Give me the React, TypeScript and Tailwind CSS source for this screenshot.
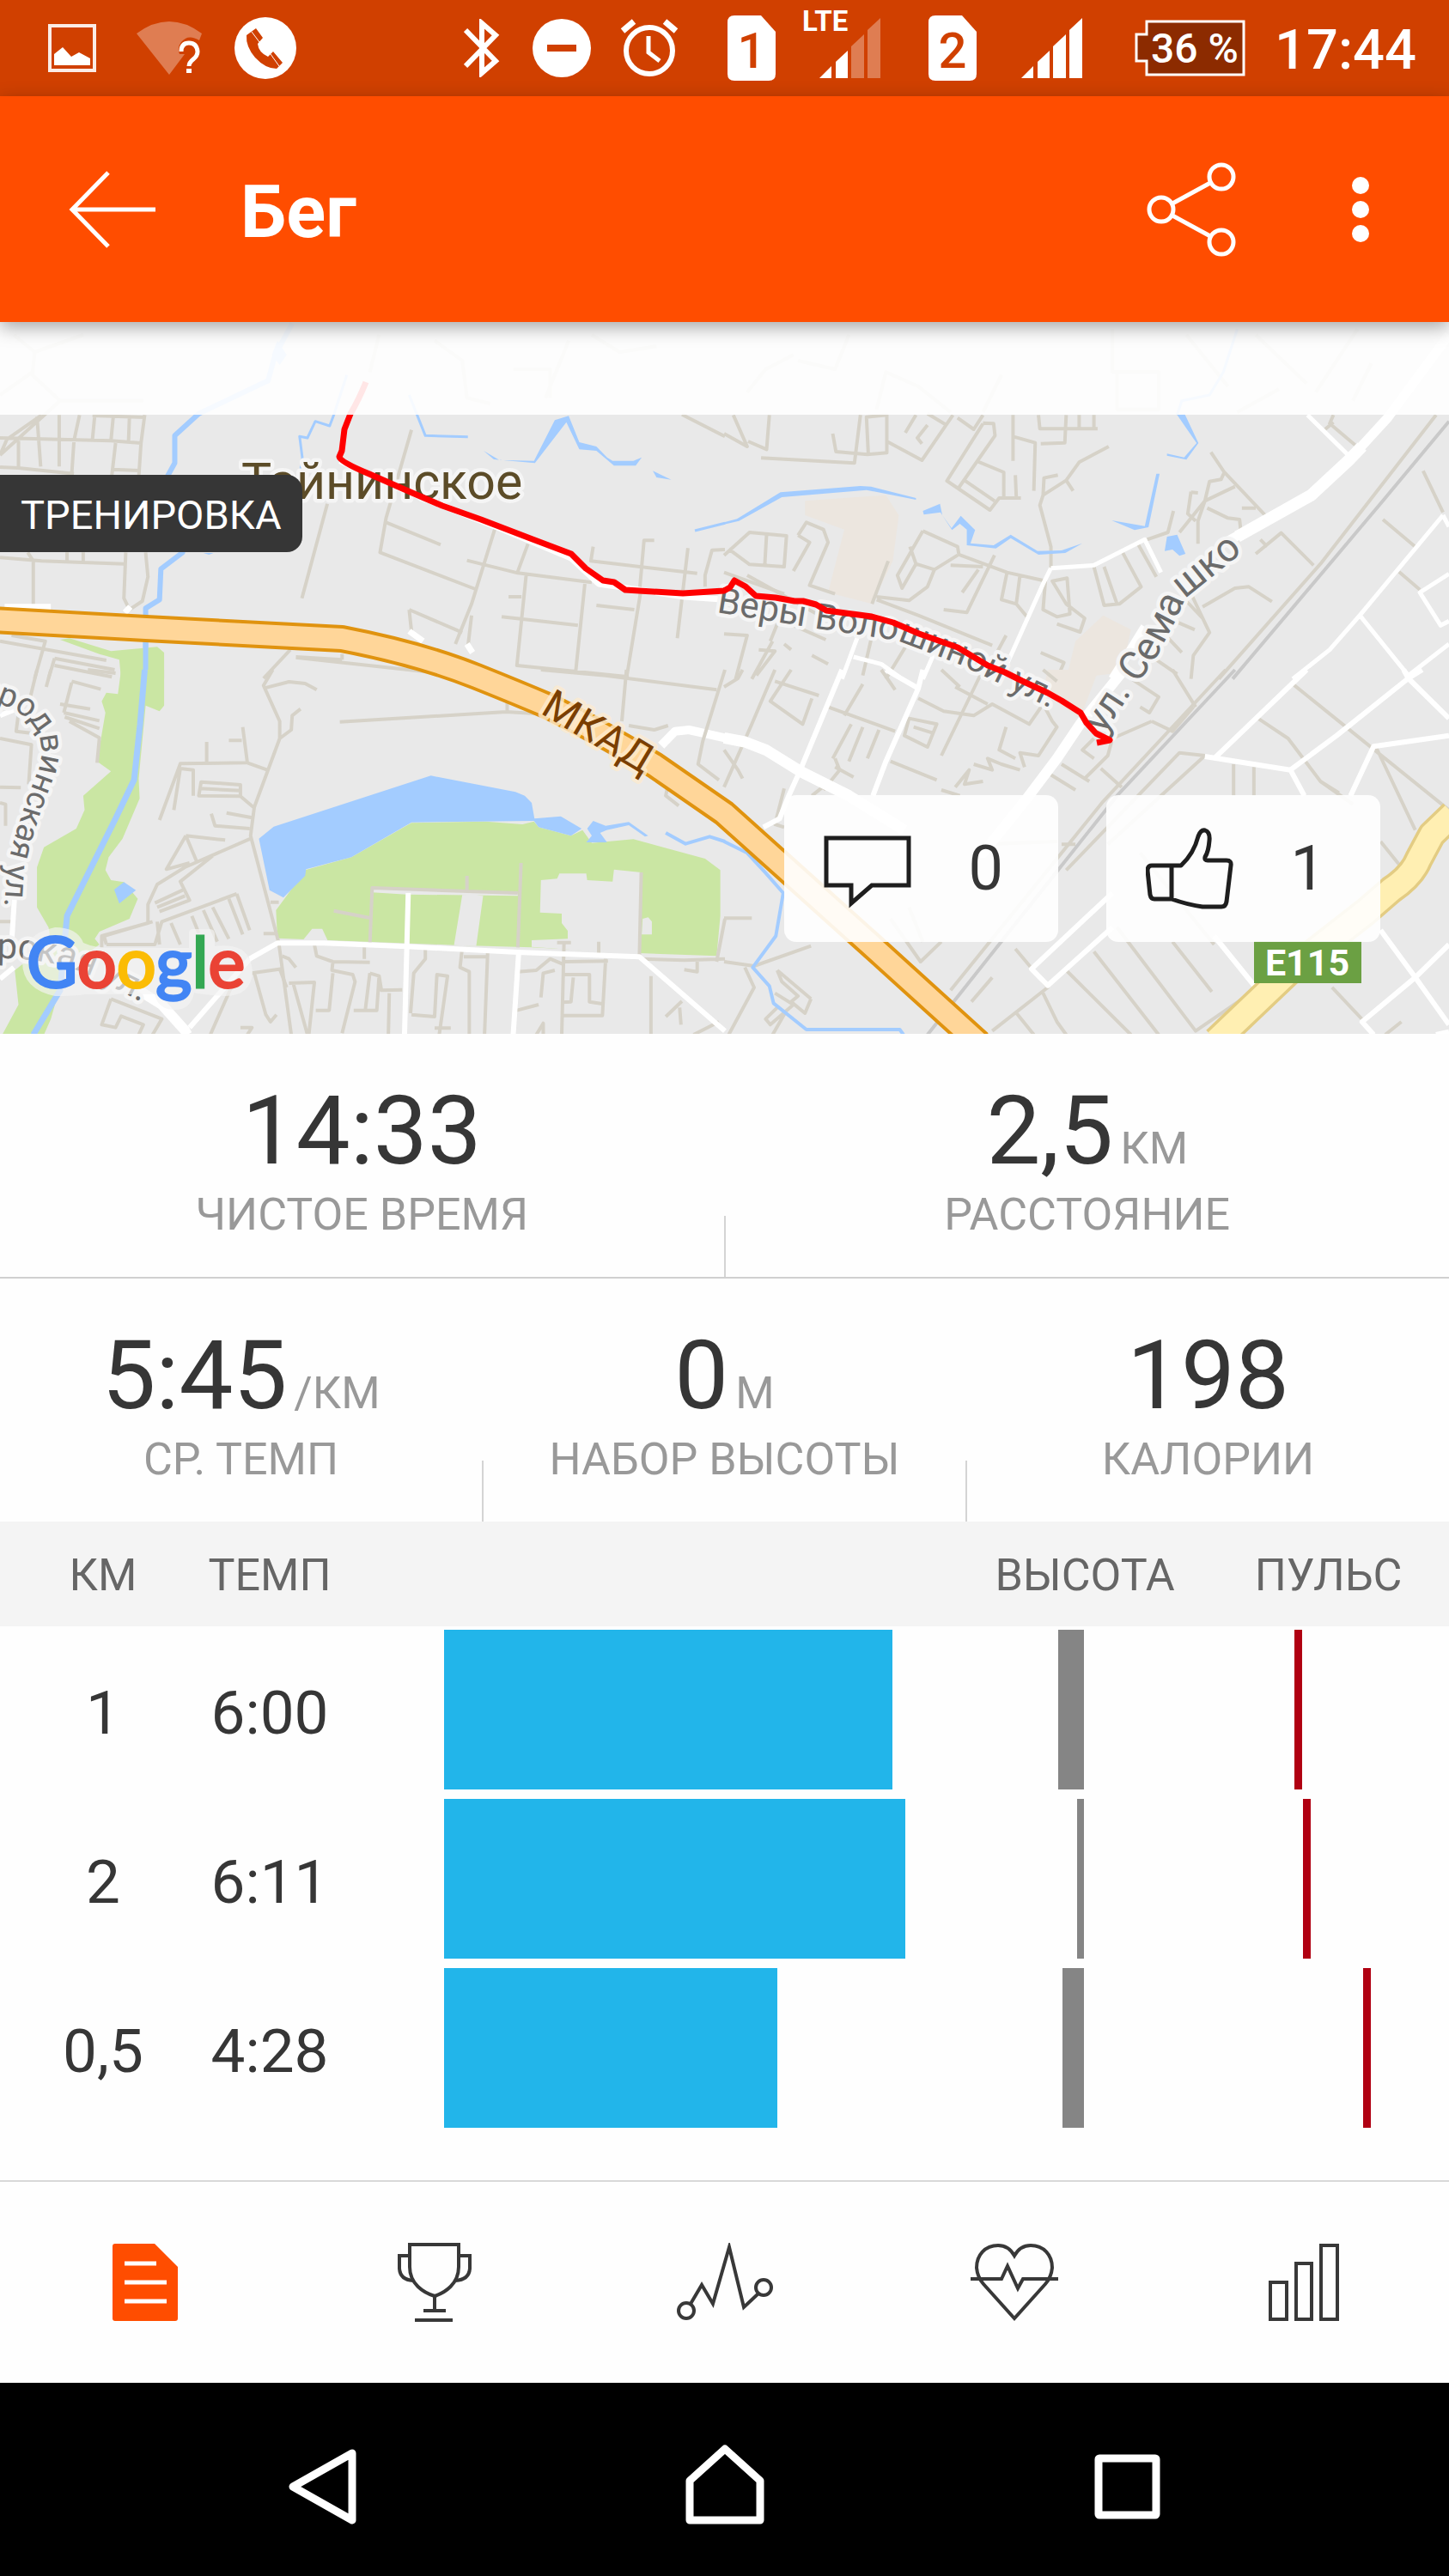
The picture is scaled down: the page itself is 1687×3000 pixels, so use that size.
import type { ReactNode } from "react";

interface Split {
  km: string;
  pace: string;
  /** share of the pace column, % */
  bar: number;
  /** px, grows left from the column centre */
  climb: number;
  /** px from the left of the pulse column */
  pulse: number;
}

const SPLITS: Split[] = [
  { km: "1", pace: "6:00", bar: 86.6, climb: 30, pulse: 101 },
  { km: "2", pace: "6:11", bar: 89, climb: 8, pulse: 111 },
  { km: "0,5", pace: "4:28", bar: 64.4, climb: 25, pulse: 181 },
];

/* ---------- status bar ---------- */

function SimIcon({ slot }: { slot: string }) {
  return (
    <svg width="56" height="76" viewBox="0 0 56 76" className="shrink-0">
      <path d="M8 0H39L56 19V68Q56 76 48 76H8Q0 76 0 68V8Q0 0 8 0Z" fill="#fff" />
      <text x="28" y="61" textAnchor="middle" fontSize="58" fontWeight="500" fill="#d04000">
        {slot}
      </text>
    </svg>
  );
}

function SignalIcon({ level }: { level: number }) {
  const bars = ["0,70 14,56 14,70", "19,51 33,38 33,70 19,70", "37,33 52,19 52,70 37,70", "56,14 71,0 71,70 56,70"];
  return (
    <svg width="71" height="70" viewBox="0 0 71 70" className="shrink-0">
      {bars.map((points, i) => (
        <polygon key={points} points={points} fill="#fff" opacity={i < level ? 1 : 0.32} />
      ))}
    </svg>
  );
}

function StatusBar() {
  return (
    <div className="flex h-28 items-center bg-[#d04000] pr-[38px] pl-14 text-white">
      <svg width="56" height="56" viewBox="0 0 56 56" className="shrink-0">
        <rect x="2" y="2" width="52" height="52" fill="none" stroke="#fff" strokeOpacity="0.9" strokeWidth="4" />
        <path d="M7 48V35L17 27L27 38L36 33L49 40V48Z" fill="#fff" />
      </svg>
      <svg width="76" height="62" viewBox="0 0 76 62" className="ml-[47px] shrink-0">
        <path d="M0 14Q38 -14 76 14L73 22Q60 14 52 24Q47 30 50 38H56L38 62Z" fill="#fff" opacity="0.32" />
        <path d="M52 35Q52 25 61 25T71 35Q71 40 66 44Q61 48 61 52" fill="none" stroke="#fff" strokeWidth="5" />
        <rect x="58" y="55" width="6" height="5" fill="#fff" />
      </svg>
      <svg width="72" height="72" viewBox="0 0 72 72" className="ml-[38px] shrink-0">
        <circle cx="36" cy="36" r="36" fill="#fff" />
        <path d="M25 13L33 24L27 31Q28 41 39 46L45 40L56 53L49 60Q36 60 24 47Q13 34 14 21Z" fill="#d04000" />
        <path d="M20 17L29 29M42 43L52 57" stroke="#fff" strokeWidth="1" />
      </svg>

      <svg width="42" height="68" viewBox="0 0 42 68" className="ml-auto shrink-0">
        <path d="M2 13L37 49L21 63V5L37 19L2 55" fill="none" stroke="#fff" strokeWidth="6" />
      </svg>
      <svg width="68" height="68" viewBox="0 0 68 68" className="ml-[38px] shrink-0">
        <circle cx="34" cy="34" r="34" fill="#fff" />
        <rect x="17" y="30" width="34" height="8" fill="#d04000" />
      </svg>
      <svg width="68" height="68" viewBox="0 0 68 68" className="ml-[34px] shrink-0" fill="none" stroke="#fff">
        <circle cx="34" cy="37" r="27" strokeWidth="6" />
        <path d="M3 14L16 3M65 14L52 3" strokeWidth="7" />
        <path d="M33 20V39L46 49" strokeWidth="5" />
      </svg>
      <div className="ml-[57px] flex shrink-0">
        <SimIcon slot="1" />
      </div>
      <div className="relative ml-[51px] flex shrink-0">
        <span className="absolute -top-3 -left-5 text-[33px] leading-8 font-bold">LTE</span>
        <SignalIcon level={2} />
      </div>
      <div className="ml-14 flex shrink-0">
        <SimIcon slot="2" />
      </div>
      <div className="ml-[52px] flex shrink-0">
        <SignalIcon level={4} />
      </div>
      <svg width="129" height="66" viewBox="0 0 129 66" className="ml-[61px] shrink-0">
        <path d="M14 2H127V64H14V48H2V17H14Z" fill="#8c2b00" stroke="#fff" strokeWidth="3" />
        <text x="70" y="50" textAnchor="middle" fontSize="48" fontWeight="500" fill="#fff">
          36 %
        </text>
      </svg>
      <span className="ml-[34px] pt-1 text-[65px] leading-none font-medium">17:44</span>
    </div>
  );
}

/* ---------- header ---------- */

function Header() {
  return (
    <header className="relative z-10 flex h-[263px] items-center bg-[#ff4d00] pr-[60px] pl-20 text-white shadow-[0_6px_20px_rgba(0,0,0,0.35)]">
      <button aria-label="Назад">
        <svg width="102" height="90" viewBox="0 0 102 90" fill="none" stroke="#fff" strokeWidth="5">
          <path d="M46 2L4 45L46 88M4 45H101" />
        </svg>
      </button>
      <h1 className="ml-[98px] grow pt-2 text-[85px] leading-none font-bold">Бег</h1>
      <button aria-label="Поделиться">
        <svg width="106" height="110" viewBox="0 0 106 110" fill="none" stroke="#fff" strokeWidth="5">
          <circle cx="17" cy="55" r="14" />
          <circle cx="87" cy="17" r="14" />
          <circle cx="87" cy="93" r="14" />
          <path d="M30 48L74 24M30 62L74 86" />
        </svg>
      </button>
      <button aria-label="Ещё" className="ml-[100px] px-4">
        <svg width="54" height="76" viewBox="0 0 54 76" fill="#fff">
          <circle cx="27" cy="10" r="10" />
          <circle cx="27" cy="38" r="10" />
          <circle cx="27" cy="66" r="10" />
        </svg>
      </button>
    </header>
  );
}

/* ---------- map ---------- */

const MINOR = "#d6d2c8";
const WATER = "#a3ccff";
const PARK = "#cae6a3";

interface TileProps {
  x: number;
  y: number;
  children: ReactNode;
}

// tile units: 1568 across half of the map, 3 per map unit down
function Tile({ x, y, children }: TileProps) {
  return <g transform={`translate(${x} ${y}) scale(0.53827 0.33333)`}>{children}</g>;
}

function Road({ d, color = MINOR, width = 4 }: { d: string; color?: string; width?: number }) {
  return <path d={d} fill="none" stroke={color} strokeWidth={width} strokeLinejoin="round" vectorEffect="non-scaling-stroke" />;
}

function NorthWest() {
  return (
    <Tile x={0} y={370}>
      <Road d="M30 60L75 120L70 200L130 290L0 480M75 120L180 60M0 270L70 190M130 290H310M0 420L240 430L305 438M90 340L15 425L0 480M80 345L88 520M128 340V520M172 340L160 430L155 550M205 340L200 425M245 345L240 430M280 345L278 432M313 340L305 438L300 560M200 342L313 348M250 438L242 550M40 430V525L160 545M245 530L300 534M0 522L40 525" />
      <Road d="M0 838L90 850L268 860M72 850V1010M145 820V855M180 820V858M60 820L72 850M272 820L268 980L280 1020L308 990L320 905L315 820" />
      <Road d="M708 650L653 980M890 392L835 700L822 820L1028 948M835 715L953 793M1010 848L1120 892L1280 925M1070 740L1020 1000L985 1140M1142 790L1118 895M1138 900L1118 1215L1360 1255M1265 930L1245 1240M1085 1045L1250 1075M1290 1005L1372 1020M1385 965L1355 1260M1283 800L1278 850L1508 893M1395 960L1383 960L1393 778H1415M1488 805L1465 1120M1568 810L1540 812L1525 900V940M1100 975H1128M885 1020L1000 1100M885 1020L890 1095M1020 1040L1012 1150" />
      <Road d="M640 1185L740 1195M628 1160L570 1260M640 1187L930 1238M740 1175V1195M0 1130L230 1197M25 1110L98 1130L75 1260M118 1190L248 1230M118 1190L105 1260M118 1215L242 1255M1475 338L1568 415" />
      <Road d="M940 80L1000 150L1010 280L1060 300M1110 180H1190V280M1230 80L1180 280M1280 60L1340 120L1420 100M820 60L800 190" />
      <Road color="#fff" width={7} d="M10 1010H110M270 1030L282 1010M885 1095L915 1130M1010 1140L1022 1170M735 500L800 550L885 610L1080 735L1235 840L1295 930L1380 950L1480 975L1568 985" />
      <Road color={WATER} width={6} d="M632 20L595 130L580 220L430 335L378 412V508L360 560L395 820L348 878L345 985L315 1015V1260" />
      <path d="M600 80L620 130L605 165L588 130Z" fill={WATER} />
      <Road color={WATER} width={3} d="M750 200L722 340L713 378L682 362L665 420L648 415L654 490L650 535M885 270L920 412L1012 416M1503 744L1568 718" />
      <path
        d="M1046 465L1080 497L1155 500L1200 358L1230 343L1253 435L1290 450L1313 488L1325 500H1370L1388 488L1375 517H1328L1290 465L1253 460L1225 365L1157 508L1068 495ZM1412 535L1452 566L1420 558ZM440 822H462L452 828Z"
        fill={WATER}
      />
      <path d="M130 1125L150 1120L240 1165L340 1150L355 1170V1262H262L258 1195L215 1175Z" fill={PARK} />
      <Road color={WATER} width={6} d="M315 1130V1262" />
    </Tile>
  );
}

function NorthEast() {
  return (
    <Tile x={843} y={370}>
      <path d="M175 640L350 620L378 690L365 850L320 1000L225 960L260 740L175 690ZM820 1040L880 1090L860 1240L740 1262L760 1130Z" fill="#ece6df" />
      <Road d="M0 405L50 450L20 340M52 432L92 460L98 340M235 405L242 468L310 478L352 472V340L308 347L312 478M295 340L282 508L80 490M352 432L428 498L495 340M440 335L478 372M415 340L392 402M440 375L418 420L428 440M505 350L540 390L560 340M560 368L583 370L586 412L505 600M560 370L482 570L575 672L595 630H642M545 500L605 540V628M520 568L585 640M625 340V500M625 415L673 437L670 605M630 550L632 625M680 340L683 388H808M740 340L737 437L685 440M768 340V385M800 340V388M832 450L768 505L740 568L690 620L683 655L707 800V875M690 620L692 560L722 550M740 568L755 605" />
      <Road d="M0 830L55 750L135 762L130 870L55 862L10 808M92 755L88 865M0 890L130 965M160 760L178 715L215 740L225 785L185 935L240 965M160 760L185 785L150 885M430 745L505 800L508 828L612 890L690 918M430 745L375 900L385 945L415 860L455 880L440 940L400 988L330 975M415 860L402 800M455 880L505 830M585 830L525 1030L475 1020M550 880L515 960M490 865L560 870M612 890L600 985L632 1000L640 900M355 850L320 1000M330 985L420 1040L580 1145M632 1000L655 1045M720 1070L770 1098L780 1050L740 1000L710 920L742 910L748 1035L720 1045L690 1020L695 920M800 870L822 1005L855 1000L902 940L862 820M895 790L935 905M822 870L850 1000" />
      <Road d="M1053 470L1082 540L1170 690M1082 540L1075 565L1050 572L1040 640L1000 720L985 750M1105 590L1040 640L1025 710V790M1010 610L1025 612M1010 608L1003 685L1020 710M1045 665L1090 700L1115 705L1118 750M1120 665H1150M972 675L960 750L915 775M1150 825L1205 752L1275 865M1160 775L1175 800M1035 1010L1105 945L1135 940L1185 992M1000 930L1050 1100L1015 1180L1010 1262M1000 990L1035 1050M975 1060L1018 1090M955 1110L990 1170M930 1190L980 1245M1425 705L1495 800M1512 535L1555 680M1460 888L1505 950M1318 340L1310 370L1365 445M1300 390L1318 365" />
      <Road d="M290 1115L50 900M150 1075L220 1125M105 1130L60 1262M0 1105L50 1110L25 1262M130 1140L145 1160M75 1160L110 1165L70 1250M190 1180L225 1210M120 1050L100 1130M320 1110L300 1250M400 1130L350 1262M685 1170L735 1205L720 1262M610 1110L590 1170" />
      <Road d="M330 320L350 190L420 240L490 330M600 200L560 330M840 40V190H940V320H850V190M1150 60L1260 230M1370 40L1280 260M1000 60L1090 240M160 150L240 180L270 60M50 260L90 180L150 130M1400 160L1360 290M1110 330L1200 250" />
      <Road color="#c9c9c9" d="M1568 362L1425 640L1100 1262" />
      <Road d="M1540 340L1290 860L1070 1262" />
      <Road color="#fff" width={11} d="M1568 60L1435 350L1350 500L1270 620L1180 700L1090 780" />
      <Road color="#fff" width={14} d="M1380 450L1350 500L1270 620L1110 765" />
      <Road color="#fff" width={5} d="M1262 340L1350 480M707 875L800 865L910 775L945 890M707 875L690 930L612 1210M1555 690L1375 1040L1310 1160L1230 1262M1375 1040L1480 1250L1568 1140M1555 690L1568 730M1568 895L1505 960L1550 1075L1568 1060M280 1185L340 1210L385 1262M290 1110L255 1262M455 1170L430 1262" />
      <Road color="#fff" width={10} d="M910 1080L840 1262" />
      <path
        d="M0 715L28 703L122 610L295 588L318 590L415 630V636L308 602L125 627L32 710L0 722ZM430 675L467 650L472 690L492 735L512 692L543 742L533 788L583 795L620 758L678 815L730 813L775 788L738 822L680 828L620 770L588 806L525 795V740L510 720L493 742L468 680L432 688ZM838 708L910 728L935 545H942L918 732L888 742ZM980 340L996 335L1026 438L1000 496L958 482V475L995 488L1022 438ZM958 765L980 758L998 825L985 832L970 810L953 815Z"
        fill={WATER}
      />
      <Road color={WATER} width={3} d="M1110 40L1080 190L1050 270L990 290L980 340" />
    </Tile>
  );
}

function SouthWest() {
  return (
    <Tile x={0} y={780}>
      <path d="M262 0H355V125L345 145L315 125L300 380L302 450L265 590L235 655L228 700L240 735L268 742L298 800L280 870L215 915L205 940L215 960L140 1050L110 1220L95 1275H5L40 1170L32 1050L110 950L105 900L80 830V690L95 620L165 555L183 490L180 440L240 355L210 320L228 150L220 110L230 80L255 85Z" fill={PARK} />
      <path d="M597 840L620 790L660 700L760 655L890 535L1050 530L1130 540L1155 530L1165 550L1235 580L1260 560L1280 605L1370 592L1525 660L1558 700V860L1550 1000L1383 990L1150 970L985 962L600 938Z" fill={PARK} />
      <path d="M1170 735L1205 730L1210 712H1268L1270 735L1325 740L1328 698L1387 708L1383 995L1150 968V945L1228 940V912L1215 885V852L1168 848ZM1000 785L1045 790L1030 965L982 962ZM655 945L675 905H697L710 950ZM1390 870L1402 865L1410 880V925H1388ZM805 762L1120 780V790L880 785L805 778Z" fill="#e9e9e9" />
      <path d="M560 590L592 548L932 370L1115 427L1135 440L1150 465L1156 520L1213 512L1258 555L1235 580L1165 550L1155 528L890 533L760 655L662 697L660 720L613 796L583 770ZM1283 528L1310 545L1360 532L1402 580L1395 583L1360 543L1312 560L1298 570L1313 603H1268L1280 580L1270 555ZM247 768L268 742L294 770L258 817Z" fill={WATER} />
      <Road color={WATER} width={4} d="M1440 570L1483 608L1535 583L1568 600" />
      <Road color={WATER} width={7} d="M313 0L303 190L290 385L250 520L145 860L130 1120L72 1275" />
      <Road d="M590 0L570 55L605 180V240L550 480L542 580L603 955L630 1275M570 65L625 42L660 48L685 70M650 137L632 160L630 210L605 240M735 182L1095 147L1210 158M1097 95V147M525 200L535 325L578 350M495 247H523M447 252V325M345 525L390 328L533 325M390 345L418 350V440M390 345L376 490M435 392L520 402V442L430 440ZM432 415L520 422M520 442L548 480M490 500L545 517M457 503L465 545L540 555M402 580L487 595M402 580L360 697L410 675M402 580L425 668M542 590L400 690L340 750L320 820V885L220 930V970M460 650L390 740L410 805L345 845M395 770L335 815M400 790L340 830M512 783L350 880L335 960L230 960M512 783L540 910M495 800L525 925M460 830L495 940M440 840L470 950M415 860L430 920M370 885L390 960M340 880L345 960M230 960L225 930L330 880" />
      <Road d="M80 0L65 100M155 40L218 68M155 45L138 150M130 120L195 137M138 150L215 178M140 165L215 205M150 180L215 238L210 325M110 0L100 60M40 150L35 215L70 222M0 240L68 262L62 400M0 410L45 412M0 465L12 470V545M0 880H25M190 0L250 12" />
      <Road d="M800 960L805 762L1120 780M1127 675L1120 970M1010 720V770M722 842L800 867M570 922H600M585 812H603M1295 950V990M1205 953H1235M1383 1000L1387 708M1220 950L1215 1275M1385 1010L1480 1015L1568 1010M1408 1070V1275M1480 1048L1508 1055V1020M1475 1158L1440 1212M1470 1180L1473 1240M1568 870L1550 1020M1555 1230L1500 1275" />
      <Road d="M610 1000L625 1010L640 1040M680 960L685 1000L720 1020L800 1022M720 1020L718 1050L763 1065L768 1090L740 1270M788 970V1010M800 1060L820 1070L825 1120L870 1118M800 1060L790 1190M625 1095L680 1092L668 1275M635 1100L665 1275M683 1190H712L720 1060M765 1190H815L820 1070M842 1130L840 1275M890 1205L940 1212L945 1065L968 1070L950 1275M920 970V1010L895 1060L888 1200M1000 970L995 1040L1015 1055V1275M1055 980L1048 1275M1003 1003H1052M1120 1055L1160 1050L1190 1010L1220 1030M1118 1190L1165 1170M1170 1145L1175 1060L1200 1050M1220 1065H1275V1160L1305 1168M1240 1075L1235 1160L1215 1162M1310 1010L1303 1208H1218M1220 1020L1315 1018M545 1060L610 1045M550 1060L575 1205L585 1230L598 1205M605 1045L620 1110M1160 1275L1175 1235V1275M520 1250H545L535 1275M940 1252H975M240 1150L220 1240L250 1250L262 1210L310 1240L300 1275M240 1150L350 1220L330 1275M500 1110L455 1275" />
      <Road color="#fff" width={6} d="M540 1010L600 955L700 955L880 967L1120 987L1383 1003L1568 1262M883 780L875 1275M1122 985L1110 1275M540 1010L410 1250M35 700L25 960M0 160L30 140M0 1080L30 1040" />
      <Road color="#fff" width={12} d="M290 1110L350 1170L400 1260L405 1275" />
      <Road color="#fff" width={10} d="M1430 265L1460 215L1490 210L1568 238" />
      <Road d="M1355 0L1345 180M1170 0L1310 20L1550 70M1568 0L1520 250L1510 330L1555 385M1360 195L1415 210L1445 195M1445 400L1440 440L1468 475" />
    </Tile>
  );
}

function SouthEast() {
  return (
    <Tile x={843} y={780}>
      <path d="M700 0H810L770 170L690 80Z" fill="#ece6df" />
      <Road d="M110 0L60 190L0 410M0 60L30 30L40 0M0 280L30 350L40 380M145 0L100 110L170 190L190 100M110 40L205 90M225 130L370 215M260 160L300 50M275 190L235 310M300 200L270 320M335 210L310 310M240 310L250 350L215 420M240 340L280 375M225 395L190 440M360 320L460 385M340 0L370 70M420 100L475 145L540 160L580 120L660 190L690 120L710 180L720 200L680 300L640 290L650 340M500 60L570 120M400 170L460 190L440 270L390 230ZM410 200L450 220M470 0L510 60M560 0L470 300M540 330L580 350L570 310L600 330L640 350M610 200L595 280L630 310M500 410L530 350L520 400L560 390M470 420L510 440M690 0L720 40M870 20L940 95L920 150L900 130M925 180L840 240L830 300L780 380M925 180L970 215L1015 130M800 240L775 280L800 310M700 360L760 420M730 330L790 390M815 345L860 410M970 0L1020 130M1040 300L985 290L740 700M1040 300L830 610M1230 50L1568 490M1155 170L1220 240L1290 390L1330 430M1410 270L1495 560M1102 330V440M1146 340V440M1420 600L1460 680M1290 390L1360 470M130 415L110 540L130 550" />
      <Road d="M0 868H60M0 1020L65 1035L188 965M45 1040L65 1110L10 1275M115 1050L188 1150M115 1050L125 1090L160 1140L145 1160L175 1200L188 1150M110 1130L150 1170L100 1240L90 1220L115 1180M135 1190L105 1275M360 870L425 1020L470 950M400 830L430 950M630 975L700 1110L580 1262M690 1130L720 1230L740 1275M580 1075L535 1160M740 1050L880 1275M800 985L940 1275M850 900L1020 1262L1130 1140M630 1195L670 1275M970 950L1055 1125M900 640L1060 960M1315 1110L1385 1230M1465 1230L1430 1275M760 610H730M560 610L720 600" />
      <Road color="#c9c9c9" d="M1105 0L850 440L440 1275" />
      <Road d="M1085 0L820 460L490 1120" />
      <Road color={WATER} width={4} d="M0 600L50 640L90 710L128 780L112 930L62 1040L98 1105L107 1165L178 1257H380L388 1275" />
      <Road color="#fff" width={13} d="M0 238L45 252L90 280L165 355L270 440L390 560" />
      <Road color="#fff" width={12} d="M865 0L770 190L720 310L650 460L560 640L540 640" />
      <Road color="#fff" width={6} d="M255 0L165 350L140 440L120 520L85 550M430 0L420 65L350 320L322 440M420 65L350 0M1260 0L1060 310M1040 303L1225 350L1325 230L1480 30L1510 0M1470 0L1480 30L1568 170M1225 350L1255 440M1568 230L1405 268L1355 440M840 780L665 1045L700 1103L840 900M1060 930L1150 1110M1420 910L1495 1075L1568 1240M1568 960L1495 1075L1380 1230L1405 1275M1540 1275L1568 1265" />
    </Tile>
  );
}

const MKAD = "M-10 722L170 732L398 744C450 754 510 770 555 788Q600 806 640 823Q700 853 762 891L843 947L1010 1097L1140 1215";
const E115 = "M1416 1212L1500 1132L1590 1062L1620 1036Q1644 1020 1652 1000L1667 972L1692 948";
const ROUTE =
  "M426 445Q418 465 408 482L401 500L398 525L395 532Q396 538 430 552L480 574L515 589L560 605L620 628L665 645L682 662L702 676L715 678L728 687L795 691L843 688L850 684L855 676L868 683L880 694L903 696L925 700L935 700L950 704L962 711L1015 718L1040 725L1070 738L1115 754L1150 775L1170 783L1190 793L1220 807L1236 816L1258 830L1265 842L1276 854L1292 862L1277 865";

function RouteMap() {
  return (
    <svg viewBox="0 375 1687 829" className="block h-auto w-full bg-[#e9e9e9]" role="img" aria-label="Карта маршрута">
      <defs>
        <path id="street-voloshina" d="M834 713L945 731L1045 746L1120 775L1230 828" />
        <path id="street-semashko" d="M1285 856L1320 802L1345 768L1366 728L1380 697L1406 676L1460 632" />
        <path id="street-rodvin" d="M-24 812L0 820Q30 830 42 850Q52 868 46 892L29 937L17 975L8 1010L4 1075" />
        <path id="street-south" d="M-4 1116Q60 1116 104 1136L190 1180" />
        <path id="ring-label" d="M628 830L782 922" />
      </defs>

      <NorthWest />
      <NorthEast />
      <SouthWest />
      <SouthEast />

      <g fill="none" strokeLinejoin="round">
        <path d={E115} stroke="#e3cc83" strokeWidth="34" />
        <path d={E115} stroke="#ffefb2" strokeWidth="27" />
        <path d={MKAD} stroke="#e0930f" strokeWidth="32" />
        <path d={MKAD} stroke="#ffd699" strokeWidth="24" />
      </g>

      <g fill="#6b6b6b" stroke="#f5f5f5" strokeWidth="9" strokeLinejoin="round" style={{ paintOrder: "stroke" }}>
        <text x="281" y="581" fontSize="59" fill="#5c4c28">
          Тайнинское
        </text>
        <text fontSize="42">
          <textPath href="#street-voloshina">Веры Волошиной ул.</textPath>
        </text>
        <text fontSize="46">
          <textPath href="#street-semashko">ул. Семашко</textPath>
        </text>
        <text fontSize="38">
          <textPath href="#street-rodvin">еродвинская ул.</textPath>
        </text>
        <text fontSize="42">
          <textPath href="#street-south">рская ул.</textPath>
        </text>
        <text fontSize="48" fill="#7a3e00" stroke="#fdebcf" strokeOpacity="0.8">
          <textPath href="#ring-label">МКАД</textPath>
        </text>
      </g>

      <path d={ROUTE} fill="none" stroke="#ff0000" strokeWidth="7" strokeLinejoin="round" />

      <rect x="1460" y="1096" width="125" height="49" fill="#6ba043" />
      <text x="1522" y="1136" textAnchor="middle" fontSize="43" fontWeight="700" fill="#fff">
        E115
      </text>

      {/* logo plate */}
      <path
        d="M64 1080Q90 1080 97 1098Q110 1104 130 1104H220V1086Q220 1082 226 1082H244Q250 1082 250 1088V1102Q292 1096 294 1132Q292 1160 262 1160Q232 1158 226 1156Q222 1176 204 1176Q184 1176 180 1158H100Q84 1160 64 1160Q26 1152 26 1120T64 1080Z"
        fill="#f5f5f5"
        opacity="0.65"
      />
      <text x="31" y="1150" fontFamily="Lato, sans-serif" fontSize="81" strokeWidth="3">
        <tspan fill="#4285f4" stroke="#4285f4">G</tspan>
        <tspan fill="#ea4335" stroke="#ea4335">o</tspan>
        <tspan fill="#fbbc05" stroke="#fbbc05">o</tspan>
        <tspan fill="#4285f4" stroke="#4285f4">g</tspan>
        <tspan fill="#34a853" stroke="#34a853">l</tspan>
        <tspan fill="#ea4335" stroke="#ea4335">e</tspan>
      </text>
    </svg>
  );
}

function SocialButton({ label, count, children }: { label: string; count: number; children: ReactNode }) {
  return (
    <button
      aria-label={label}
      className="flex h-[171px] w-[319px] items-center justify-between rounded-[14px] bg-white/90 pr-16 pl-[46px] text-[72px] text-[#363636]"
    >
      {children}
      <span className="leading-none">{count}</span>
    </button>
  );
}

function MapSection() {
  return (
    <section className="relative overflow-hidden">
      <RouteMap />
      <div className="absolute inset-x-0 top-0 h-[108px] bg-white/90" />
      <span className="absolute top-[178px] left-0 flex h-[90px] items-center rounded-r-[18px] bg-[#363636] px-6 pt-1 text-[47px] text-white">
        ТРЕНИРОВКА
      </span>
      <div className="absolute right-20 bottom-[107px] flex gap-14">
        <SocialButton label="Комментарии" count={0}>
          <svg width="102" height="86" viewBox="0 0 102 86" fill="none" stroke="#1e1e1e" strokeWidth="5" className="mt-2">
            <path d="M3 3H99V58H56L32 79V58H3Z" />
          </svg>
        </SocialButton>
        <SocialButton label="Нравится" count={1}>
          <svg width="102" height="96" viewBox="0 0 102 96" fill="none" stroke="#1e1e1e" strokeWidth="5" strokeLinejoin="round">
            <path d="M30 44H41Q56 30 61 10Q64 2 69 3Q75 5 74 15Q73 28 69 34Q68 38 72 38H94Q100 38 99 44L94 86Q93 92 88 92H66Q50 90 30 83H10Q6 83 5 78L2 50Q2 44 7 44H30V83" />
          </svg>
        </SocialButton>
      </div>
    </section>
  );
}

/* ---------- stats ---------- */

function Stat({ value, unit, label }: { value: string; unit?: string; label: string }) {
  return (
    <div className="flex flex-1 flex-col items-center pt-[57px]">
      <div className="flex items-baseline gap-2 text-[112px] leading-[112px] text-[#363636]">
        {value}
        {unit && <span className="text-[52px] leading-none text-[#999]">{unit}</span>}
      </div>
      <div className="mt-[10px] text-[52px] leading-[64px] text-[#999]">{label}</div>
    </div>
  );
}

function Divider() {
  return <div className="h-[71px] w-[2px] shrink-0 self-end bg-[#d4d4d4]" />;
}

function Stats() {
  return (
    <section>
      <div className="flex h-[285px] border-b-2 border-[#d0d0d0]">
        <Stat value="14:33" label="ЧИСТОЕ ВРЕМЯ" />
        <Divider />
        <Stat value="2,5" unit="КМ" label="РАССТОЯНИЕ" />
      </div>
      <div className="flex h-[283px]">
        <Stat value="5:45" unit="/КМ" label="СР. ТЕМП" />
        <Divider />
        <Stat value="0" unit="М" label="НАБОР ВЫСОТЫ" />
        <Divider />
        <Stat value="198" label="КАЛОРИИ" />
      </div>
    </section>
  );
}

function SplitsTable() {
  return (
    <table className="mb-[54px] w-full table-fixed border-collapse text-center text-[#363636]">
      <colgroup>
        <col className="w-[240px]" />
        <col className="w-[148px]" />
        <col />
        <col className="w-[286px]" />
        <col className="w-[281px]" />
      </colgroup>
      <thead>
        <tr className="h-[122px] bg-[#f4f4f4] text-[52px] leading-[64px] text-[#666]">
          <th className="pt-1 font-normal">КМ</th>
          <th className="pt-1 font-normal">ТЕМП</th>
          <td />
          <th className="pt-1 font-normal">ВЫСОТА</th>
          <th className="pt-1 font-normal">ПУЛЬС</th>
        </tr>
      </thead>
      <tbody>
        {SPLITS.map((s) => (
          <tr key={s.km} className="h-[197px] text-[71px] leading-[80px]">
            <td className="pt-1">{s.km}</td>
            <td className="pt-1">{s.pace}</td>
            <td className="pt-1 pb-[7px] pl-[129px]">
              <div className="h-[186px] bg-[#22b5ea]" style={{ width: `${s.bar}%` }} />
            </td>
            <td className="pt-1 pr-[144px] pb-[7px]">
              <div className="ml-auto h-[186px] bg-[#858585]" style={{ width: s.climb }} />
            </td>
            <td className="pt-1 pb-[7px]">
              <div className="h-[186px] w-[9px] bg-[#b00012]" style={{ marginLeft: s.pulse }} />
            </td>
          </tr>
        ))}
      </tbody>
    </table>
  );
}

/* ---------- bottom ---------- */

const TABS = [
  {
    label: "Обзор",
    icon: (
      <svg width="76" height="92" viewBox="0 0 76 92">
        <path d="M3 1H49L76 28V88Q76 91 73 91H3Q0 91 0 88V4Q0 1 3 1Z" fill="#ff4d00" />
        <path d="M14 24H51M14 46H63M14 68H63" stroke="#fff" strokeWidth="5" />
      </svg>
    ),
  },
  {
    label: "Достижения",
    icon: (
      <svg width="88" height="92" viewBox="0 0 88 92" fill="none" stroke="#383838" strokeWidth="4">
        <path d="M15 2H72V28C72 48 56 58 44 62C31 58 15 48 15 28Z" />
        <path d="M15 15H3V30Q4 43 19 44M72 15H85V30Q84 43 68 44M44 62V78M31 79H57M21 90H65" />
      </svg>
    ),
  },
  {
    label: "Графики",
    icon: (
      <svg width="112" height="92" viewBox="0 0 112 92" fill="none" stroke="#383838" strokeWidth="4">
        <circle cx="11" cy="79" r="9" />
        <circle cx="101" cy="52" r="9" />
        <path d="M16 71L29 49L42 71L61 5L78 75L95 59" />
      </svg>
    ),
  },
  {
    label: "Пульс",
    icon: (
      <svg width="102" height="92" viewBox="0 0 102 92" fill="none" stroke="#383838" strokeWidth="4">
        <path d="M51 15C46 6 39 3 32 3C17 3 7 14 7 29Q8 40 15 48L51 88L87 48Q94 40 95 29C95 14 85 3 70 3C63 3 56 6 51 15Z" />
        <path d="M0 42H36L43 27L55 53L61 42H102" />
      </svg>
    ),
  },
  {
    label: "Зоны",
    icon: (
      <svg width="82" height="92" viewBox="0 0 82 92" fill="none" stroke="#383838" strokeWidth="4">
        <path d="M2 46H21V89H2ZM32 24H50V89H32ZM61 3H80V89H61Z" />
      </svg>
    ),
  },
];

function TabBar() {
  return (
    <nav className="flex h-[236px] border-t-2 border-[#d8d8d8]">
      {TABS.map((tab) => (
        <button key={tab.label} aria-label={tab.label} className="flex flex-1 items-center justify-center">
          {tab.icon}
        </button>
      ))}
    </nav>
  );
}

function SystemNav() {
  return (
    <div className="grid h-[225px] grid-cols-3 bg-black px-[140px] pt-4">
      <button aria-label="Назад" className="flex items-center justify-center">
        <svg width="80" height="88" viewBox="0 0 80 88" fill="none" stroke="#fff" strokeWidth="9" strokeLinejoin="round">
          <path d="M75 5L6 44L75 83Z" />
        </svg>
      </button>
      <button aria-label="Домой" className="flex items-center justify-center">
        <svg width="92" height="100" viewBox="0 0 92 100" fill="none" stroke="#fff" strokeWidth="9" strokeLinejoin="round">
          <path d="M5 43L46 6L87 43V89H5Z" />
        </svg>
      </button>
      <button aria-label="Недавние" className="flex items-center justify-center">
        <svg width="77" height="76" viewBox="0 0 77 76" fill="none" stroke="#fff" strokeWidth="9">
          <rect x="5" y="5" width="67" height="66" rx="1" strokeLinejoin="round" />
        </svg>
      </button>
    </div>
  );
}

export default function App() {
  return (
    <div className="bg-[#fefefe] font-['Roboto',sans-serif]">
      <StatusBar />
      <Header />
      <main>
        <MapSection />
        <Stats />
        <SplitsTable />
      </main>
      <TabBar />
      <SystemNav />
    </div>
  );
}
